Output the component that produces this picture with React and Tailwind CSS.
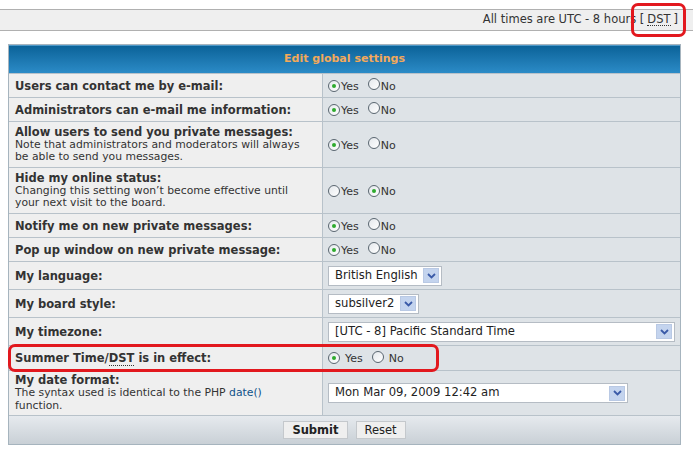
import React from "react";

const font = { fontFamily: '"DejaVu Sans", Verdana, sans-serif' };

function Radio({ checked }) {
  return (
    <span className="inline-flex w-[12px] h-[12px] rounded-full border border-[#5a6670] bg-gradient-to-br from-[#e4e8ec] to-white items-center justify-center shrink-0">
      {checked && <span className="w-[4px] h-[4px] rounded-full bg-[#2eaa2e]" />}
    </span>
  );
}

function YesNo({ yes = true, spaced = false }) {
  return (
    <div className="flex items-center text-[11px] leading-[12px] text-[#333]">
      <Radio checked={yes} />
      <span className={`pt-[2px] ${spaced ? "ml-[5px]" : "ml-[1px]"}`}>Yes</span>
      <span className="ml-[9px]">
        <Radio checked={!yes} />
      </span>
      <span className={`pt-[2px] ${spaced ? "ml-[5px]" : "ml-[1px]"}`}>No</span>
    </div>
  );
}

function Select({ value, width }) {
  return (
    <div
      className={`flex items-center h-[20px] bg-white border border-[#b5bcc4] pl-[6px] pr-[2px] text-[11.6px] text-[#222] ${width}`}
    >
      <span className="flex-1 whitespace-nowrap">{value}</span>
      <span className="w-[16px] h-[15px] bg-[#c4d4ee] border border-[#b9c9e4] flex items-center justify-center">
        <svg width="9" height="6" viewBox="0 0 9 6">
          <path d="M1 1 L4.5 4.5 L8 1" fill="none" stroke="#3a5aa8" strokeWidth="1.8" />
        </svg>
      </span>
    </div>
  );
}

function Row({ label, desc, children, h }) {
  return (
    <div className={`grid grid-cols-[314px_1fr] border-t border-[#b8c2ca] ${h}`}>
      <div className="bg-[#efefef] border-r border-[#b8c2ca] px-[6px] flex flex-col justify-center">
        <div className="text-[11.5px] font-bold text-[#333] leading-[12px]">{label}</div>
        {desc && <div className="text-[10.8px] text-[#333] leading-[12.5px] mt-[1px]">{desc}</div>}
      </div>
      <div className="bg-[#dee3e7] px-[5px] flex items-center">{children}</div>
    </div>
  );
}

export default function App() {
  return (
    <div className="w-[693px] h-[458px] bg-white relative overflow-hidden" style={font}>
      <div className="mt-[9px] h-[22px] bg-[#efefef] border-y border-[#b0b0b0] flex items-center justify-end pr-[15px] text-[11.5px] text-[#333]">
        <span>All times are UTC - 8 hours [ </span>
        <span className="border-b border-dotted border-[#333] leading-[11px] mx-[3px]">DST</span>
        <span>]</span>
      </div>

      <div className="absolute left-[631px] top-[3px] w-[55px] h-[34px] border-[3px] border-[#e2181e] rounded-[7px]" />

      <div className="mt-[13px] ml-[8px] w-[673px] border border-[#a6b4be] bg-white">
        <div className="h-[28px] bg-gradient-to-b from-[#0a6399] to-[#2b8bc7] border-t border-[#4e98c8] flex items-center justify-center text-[11px] font-bold text-[#f3a95a]">
          Edit global settings
        </div>
        <Row label="Users can contact me by e-mail:" h="h-[24px]">
          <YesNo />
        </Row>
        <Row label="Administrators can e-mail me information:" h="h-[24px]">
          <YesNo />
        </Row>
        <Row
          label="Allow users to send you private messages:"
          desc={<>Note that administrators and moderators will always<br />be able to send you messages.</>}
          h="h-[46px]"
        >
          <YesNo />
        </Row>
        <Row
          label="Hide my online status:"
          desc={<>Changing this setting won’t become effective until<br />your next visit to the board.</>}
          h="h-[46px]"
        >
          <YesNo yes={false} />
        </Row>
        <Row label="Notify me on new private messages:" h="h-[24px]">
          <YesNo />
        </Row>
        <Row label="Pop up window on new private message:" h="h-[24px]">
          <YesNo />
        </Row>
        <Row label="My language:" h="h-[28px]">
          <Select value="British English" width="w-[114px]" />
        </Row>
        <Row label="My board style:" h="h-[28px]">
          <Select value="subsilver2" width="w-[91px]" />
        </Row>
        <Row label="My timezone:" h="h-[28px]">
          <Select value="[UTC - 8] Pacific Standard Time" width="w-[347px]" />
        </Row>
        <Row
          label={
            <>
              Summer Time/<span className="border-b border-dotted border-[#333]">DST</span> is in effect:
            </>
          }
          h="h-[25px]"
        >
          <YesNo spaced />
        </Row>
        <Row
          label="My date format:"
          desc={
            <>
              The syntax used is identical to the PHP <span className="text-[#105289]">date()</span>
              <br />
              function.
            </>
          }
          h="h-[45px]"
        >
          <Select value="Mon Mar 09, 2009 12:42 am" width="w-[300px]" />
        </Row>
        <div className="h-[29px] border-t border-[#b8c2ca] bg-gradient-to-b from-[#e6eaee] to-[#c9d0d6] flex items-center justify-center gap-[8px]">
          <button className="h-[18px] px-[8px] bg-[#efefef] border border-[#c4c8cc] text-[11.5px] font-bold text-[#222]" style={font}>
            Submit
          </button>
          <button className="h-[18px] px-[8px] bg-[#efefef] border border-[#c4c8cc] text-[11.5px] text-[#222]" style={font}>
            Reset
          </button>
        </div>
      </div>

      <div className="absolute left-[8px] top-[344px] w-[431px] h-[28px] border-[3px] border-[#e2181e] rounded-[7px]" />
    </div>
  );
}
